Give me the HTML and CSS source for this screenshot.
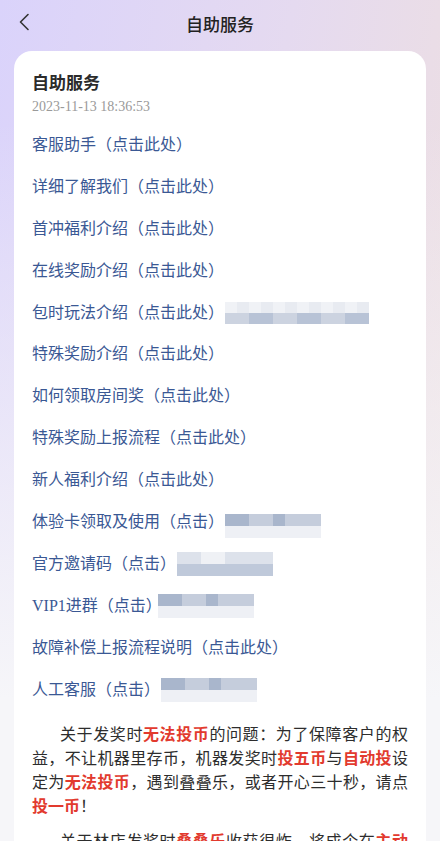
FILE: index.html
```html
<!DOCTYPE html>
<html lang="zh-CN">
<head>
<meta charset="utf-8">
<title>自助服务</title>
<link rel="stylesheet" href="styles.css">
</head>
<body>
<div class="page">
  <header class="nav">
    <span class="back">
      <svg width="12" height="18" viewBox="0 0 12 18"><path d="M10 1.5 L2.5 9 L10 16.5" fill="none" stroke="#333" stroke-width="1.6" stroke-linecap="round" stroke-linejoin="round"/></svg>
    </span>
    <h1 class="nav-title">自助服务</h1>
  </header>
  <main class="card">
    <h2 class="card-title">自助服务</h2>
    <div class="date">2023-11-13 18:36:53</div>
    <ul class="links">
      <li>客服助手（点击此处）</li>
      <li>详细了解我们（点击此处）</li>
      <li>首冲福利介绍（点击此处）</li>
      <li>在线奖励介绍（点击此处）</li>
      <li>包时玩法介绍（点击此处）<span class="blur w144 a"><i></i><i></i><i></i><i></i><i></i><i></i><i></i><i></i><i></i><i></i><i></i><i></i><i></i><i></i><i></i><i></i><i></i><i></i><i></i><i></i><i></i><i></i><i></i><i></i></span></li>
      <li>特殊奖励介绍（点击此处）</li>
      <li>如何领取房间奖（点击此处）</li>
      <li>特殊奖励上报流程（点击此处）</li>
      <li>新人福利介绍（点击此处）</li>
      <li>体验卡领取及使用（点击）<span class="blur w96 b low"><i></i><i></i><i></i><i></i><i></i><i></i><i></i><i></i><i></i><i></i><i></i><i></i><i></i><i></i><i></i><i></i></span></li>
      <li>官方邀请码（点击）<span class="blur w96 c"><i></i><i></i><i></i><i></i><i></i><i></i><i></i><i></i><i></i><i></i><i></i><i></i><i></i><i></i><i></i><i></i></span></li>
      <li>VIP1进群（点击）<span class="blur w96 b tight"><i></i><i></i><i></i><i></i><i></i><i></i><i></i><i></i><i></i><i></i><i></i><i></i><i></i><i></i><i></i><i></i></span></li>
      <li>故障补偿上报流程说明（点击此处）</li>
      <li>人工客服（点击）<span class="blur w96 b"><i></i><i></i><i></i><i></i><i></i><i></i><i></i><i></i><i></i><i></i><i></i><i></i><i></i><i></i><i></i><i></i></span></li>
    </ul>
    <p class="para">关于发奖时<b>无法投币</b>的问题：为了保障客户的权益，不让机器里存币，机器发奖时<b>投五币</b>与<b>自动投</b>设定为<b>无法投币</b>，遇到叠叠乐，或者开心三十秒，请点<b>投一币</b>！</p>
    <p class="para">关于林店发奖时<b>叠叠乐</b>收获很炸，将成个在<b>主动下设定</b>的问题，请联系客服处理。</p>
  </main>
</div>
</body>
</html>
```
FILE: styles.css
```css
* { box-sizing: border-box; }
html, body { margin: 0; padding: 0; }
body {
  width: 440px;
  height: 841px;
  overflow: hidden;
  font-family: "Liberation Serif", "Noto Sans CJK SC", serif;
  background:
    linear-gradient(to bottom, rgba(246,246,250,0) 0px, rgba(246,246,250,0) 120px, #f6f6f9 700px),
    linear-gradient(100deg, #dad3fb 0%, #e5daf0 50%, #efe0de 100%);
}
.page { padding: 0 14px; }
.nav {
  height: 51px;
  display: flex;
  align-items: center;
  justify-content: center;
  position: relative;
}
.back {
  position: absolute;
  left: 4px;
  top: 13px;
  display: flex;
}
.nav-title {
  margin: 0;
  font-family: "Noto Sans CJK SC", sans-serif;
  font-size: 17px;
  font-weight: 500;
  color: #222;
  position: relative;
  top: -2px;
}
.card {
  background: #fff;
  border-radius: 18px 18px 0 0;
  padding: 19px 18px 0 18px;
  height: 800px;
}
.card-title {
  margin: 0;
  font-family: "Noto Sans CJK SC", sans-serif;
  font-size: 17px;
  font-weight: 700;
  color: #2b2b2b;
  line-height: 24px;
}
.date {
  font-size: 14px;
  color: #9a9a9a;
  line-height: 20px;
  margin-top: 3px;
}
.links {
  list-style: none;
  margin: 17px 0 0 0;
  padding: 0;
  display: flex;
  flex-direction: column;
  gap: 19.9px;
}
.links li {
  font-size: 16px;
  height: 22px;
  line-height: 22px;
  color: #3a5894;
  display: flex;
  align-items: center;
  white-space: nowrap;
}
.blur {
  display: grid;
  grid-template-rows: repeat(2, 1fr);
  grid-auto-flow: column;
  margin-left: 1px;
}
.blur.low { position: relative; top: 4px; }
.blur.tight { margin-left: -4px; }
.blur i { display: block; }
.w144 { width: 144px; height: 22px; grid-template-columns: repeat(12, 1fr); }
.w96 { width: 96px; height: 24px; grid-template-columns: repeat(8, 1fr); }
.blur.a i:nth-child(odd) { background: #e8ebf1; }
.blur.a i:nth-child(even) { background: #ccd3e0; }
.blur.a i:nth-child(4n+1) { background: #f0f2f6; }
.blur.a i:nth-child(8n+6), .blur.a i:nth-child(8n+8) { background: #b8c3d6; }
.blur.b i:nth-child(odd) { background: #c5cddc; }
.blur.b i:nth-child(even) { background: #eef0f5; }
.blur.b i:nth-child(1), .blur.b i:nth-child(3), .blur.b i:nth-child(9) { background: #a9b6cc; }
.blur.c i:nth-child(odd) { background: #dde2eb; }
.blur.c i:nth-child(even) { background: #bfc9da; }
.blur.c i:nth-child(5), .blur.c i:nth-child(7) { background: #eff1f5; }
.para {
  margin: 20px 0 0 0;
  font-family: "Noto Sans CJK SC", sans-serif;
  font-size: 16px;
  line-height: 24px;
  color: #2d2d2d;
  text-indent: 28px;
  text-align: justify;
}
.para + .para { margin-top: 11px; }
.para b { color: #e23a2e; font-weight: 700; }
```
